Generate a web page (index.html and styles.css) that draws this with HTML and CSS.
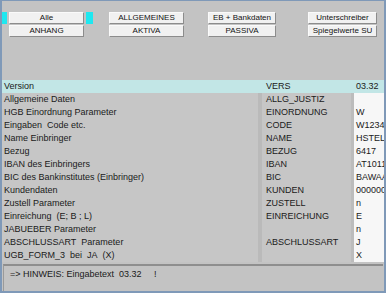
FILE: index.html
```html
<!DOCTYPE html>
<html>
<head>
  <meta charset="utf8" />
  <meta name="viewport" content="width=device-width, initial-scale=1" >
  <title>Steuerung</title>
  <link rel="stylesheet" href="styles.css">
</head>
<body>
  <div class="window">
    <div class="toolbar">
      <span class="mark mark--left"></span>
      <button class="btn btn--c1">Alle</button>
      <span class="mark mark--right"></span>
      <button class="btn btn--c2">ALLGEMEINES</button>
      <button class="btn btn--c3">EB + Bankdaten</button>
      <button class="btn btn--c4">Unterschreiber</button>
      <button class="btn btn--c1">ANHANG</button>
      <button class="btn btn--c2">AKTIVA</button>
      <button class="btn btn--c3">PASSIVA</button>
      <button class="btn btn--c4">Spiegelwerte SU</button>
    </div>

    <div class="grid">
      <div class="row row--active"><span class="label">Version</span><span class="code">VERS</span><span class="value">03.32</span></div>
      <div class="row"><span class="label">Allgemeine Daten</span><span class="code">ALLG_JUSTIZ</span><span class="value"></span></div>
      <div class="row"><span class="label">HGB Einordnung Parameter</span><span class="code">EINORDNUNG</span><span class="value">W</span></div>
      <div class="row"><span class="label">Eingaben&nbsp; Code etc.</span><span class="code">CODE</span><span class="value">W1234</span></div>
      <div class="row"><span class="label">Name Einbringer</span><span class="code">NAME</span><span class="value">HSTEL</span></div>
      <div class="row"><span class="label">Bezug</span><span class="code">BEZUG</span><span class="value">6417</span></div>
      <div class="row"><span class="label">IBAN des Einbringers</span><span class="code">IBAN</span><span class="value">AT1011</span></div>
      <div class="row"><span class="label">BIC des Bankinstitutes (Einbringer)</span><span class="code">BIC</span><span class="value">BAWAA</span></div>
      <div class="row"><span class="label">Kundendaten</span><span class="code">KUNDEN</span><span class="value">000000</span></div>
      <div class="row"><span class="label">Zustell Parameter</span><span class="code">ZUSTELL</span><span class="value">n</span></div>
      <div class="row"><span class="label">Einreichung&nbsp; (E; B ; L)</span><span class="code">EINREICHUNG</span><span class="value">E</span></div>
      <div class="row"><span class="label">JABUEBER Parameter</span><span class="code"></span><span class="value">n</span></div>
      <div class="row"><span class="label">ABSCHLUSSART&nbsp; Parameter</span><span class="code">ABSCHLUSSART</span><span class="value">J</span></div>
      <div class="row"><span class="label">UGB_FORM_3&nbsp; bei&nbsp; JA&nbsp; (X)</span><span class="code"></span><span class="value">X</span></div>
    </div>

    <div class="status">=&gt; HINWEIS: Eingabetext&nbsp; 03.32&nbsp;&nbsp;&nbsp;&nbsp; !</div>
  </div>
</body>
</html>
```

FILE: styles.css
```css
body{
  margin: 0;
  font-family: "Liberation Sans", Arial, sans-serif;
}

.window{
  width: 386px;
  height: 293px;
  box-sizing: border-box;
  border: 2px solid #7f99b8;
  border-top-width: 1px;
  background: #c3c3c3;
  overflow: hidden;
  display: flex;
  flex-direction: column;
}

/* knopfleiste */
.toolbar{
  display: grid;
  grid-template-columns: 7px 75px 25px 75px 24px 68px 32px 69px;
  grid-template-rows: 12px 12px;
  row-gap: 1px;
  margin-top: 11px;
}
.mark{
  background: #1ee8f0;
  width: 7px;
  grid-row: 1;
}
.mark--left{
  grid-column: 1;
  margin-left: -2px;
}
.mark--right{
  grid-column: 3;
  margin-left: 2px;
}
.btn{
  font-family: "Liberation Sans", Arial, sans-serif;
  font-size: 8px;
  color: #111;
  padding: 0;
  margin: 0;
  height: 12px;
  line-height: 10px;
  background: #f1f1f1;
  border: 1px solid #fafafa;
  border-right-color: #8c8c8c;
  border-bottom-color: #8c8c8c;
  border-radius: 0;
}
.btn--c1{ grid-column: 2; }
.btn--c2{ grid-column: 4; }
.btn--c3{ grid-column: 6; }
.btn--c4{ grid-column: 8; }

/* tabelle */
.grid{
  margin-top: 43px;
}
.row{
  display: grid;
  grid-template-columns: 256px 96px 1fr;
  height: 13px;
  line-height: 13px;
  font-size: 9px;
  color: #1a1a1a;
  white-space: nowrap;
}
.label{
  padding-left: 2px;
  background: #c6c6c6;
}
.code{
  padding-left: 4px;
  background: #c6c6c6;
  border-left: 4px solid #bababa;
  border-right: 3px solid #bcbcbc;
}
.value{
  padding-left: 2px;
  background: #f7f7f7;
  overflow: hidden;
}
.row--active .label,
.row--active .code,
.row--active .value{
  background: #c2e6e6;
}
.row--active .code{
  border-left-color: #c2e6e6;
  border-right-color: #c2e6e6;
}

/* hinweis */
.status{
  flex: 1;
  margin: 2px 1px 0;
  padding: 2px 0 0 6px;
  border-top: 2px solid #8e8e8e;
  border-left: 1px solid #9a9a9a;
  font-size: 9px;
  line-height: 12px;
  color: #1a1a1a;
  white-space: nowrap;
}
```
